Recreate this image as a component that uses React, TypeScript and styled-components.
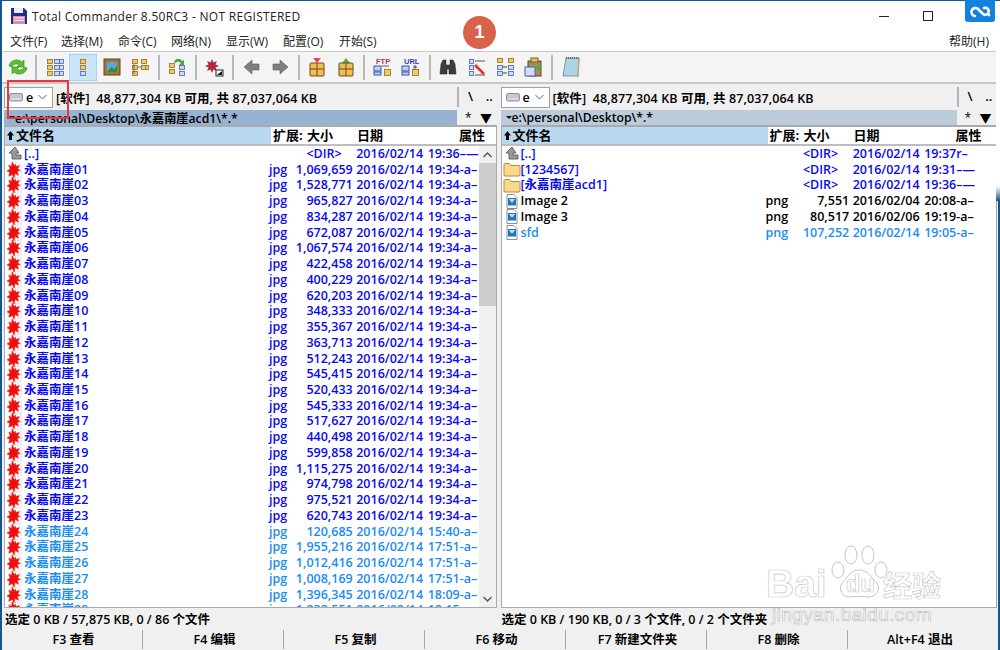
import React from 'react'
import styled, { createGlobalStyle } from 'styled-components'

const GlobalStyle = createGlobalStyle`
  html, body { margin: 0; padding: 0; background: #14578c; }
  #root { width: 1000px; height: 650px; overflow: hidden; position: relative; }
`

const UI = `"Open Sans", "Noto Sans CJK SC", sans-serif`

const Screen = styled.div`
  position: relative;
  width: 1000px;
  height: 650px;
  overflow: hidden;
  background: #14578c;
  &::after {
    content: '';
    position: absolute;
    right: 0;
    top: 1px;
    width: 4px;
    height: 200px;
    background: linear-gradient(180deg, #ffffff 0, #ffffff 185px, #14578c 100%);
  }
`

const Window = styled.div`
  width: 996px;
  height: 649px;
  margin: 1px 0 0 2px;
  display: flex;
  flex-direction: column;
  background: #ffffff;
  font-family: ${UI};
  color: #000;
`

const TitleBar = styled.div`
  height: 30px;
  display: flex;
  align-items: center;
  padding: 0 0 0 9px;
  gap: 5px;
  font-size: 12px;
  letter-spacing: 0.3px;
  color: #222;
`

const WinControls = styled.div`
  margin-left: auto;
  display: flex;
  align-items: center;
  gap: 34px;
  padding-right: 65px;
`

const MinBtn = styled.i`
  display: block;
  width: 10px;
  height: 1px;
  background: #222;
`

const MaxBtn = styled.i`
  display: block;
  width: 8px;
  height: 8px;
  border: 1px solid #222;
`

const MenuBar = styled.div`
  height: 20px;
  display: flex;
  align-items: center;
  padding-left: 8px;
  font-size: 12px;
  color: #222;
  border-bottom: 1px solid #c9c9c9;
`

const MenuItem = styled.span<{ $w?: number }>`
  width: ${p => p.$w ?? 56}px;
  white-space: nowrap;
  &:last-child {
    width: auto;
    margin-left: auto;
    padding-right: 9px;
  }
`

const ToolBar = styled.div`
  height: 30px;
  display: flex;
  align-items: center;
  padding-left: 1.5px;
  background: #f4f4f4;
  border-bottom: 2px solid #c9c9c9;
`

const ToolBtn = styled.div<{ $active?: boolean }>`
  width: 28.4px;
  height: 27px;
  display: flex;
  align-items: center;
  justify-content: center;
  box-sizing: border-box;
  background: ${p => (p.$active ? '#cce4f7' : 'transparent')};
  border: 1px solid ${p => (p.$active ? '#a6d2f3' : 'transparent')};
`

const ToolSep = styled.div`
  width: 2px;
  height: 25px;
  margin: 0 3.4px;
  background: #b9b9b9;
`

const Panels = styled.div`
  flex: 1;
  min-height: 0;
  display: grid;
  grid-template-columns: 493px 496px;
  column-gap: 3.5px;
  padding-left: 2px;
  background: #f0f0f0;
`

const Panel = styled.section`
  min-width: 0;
  min-height: 0;
  display: flex;
  flex-direction: column;
`

const DriveRow = styled.div`
  height: 26px;
  display: flex;
  align-items: center;
  font-size: 12.5px;
  font-weight: 600;
  letter-spacing: 0.1px;
  white-space: pre;
`

const DriveCombo = styled.div`
  width: 49px;
  height: 21px;
  box-sizing: border-box;
  flex: none;
  display: flex;
  align-items: center;
  gap: 3px;
  padding-left: 4px;
  margin-right: 3px;
  background: #fff;
  border: 1px solid #a0a0a0;
`

const Chevron = styled.svg`
  margin-left: auto;
  margin-right: 5px;
`

const RootBtns = styled.div`
  margin-left: auto;
  height: 20px;
  width: 40px;
  flex: none;
  box-sizing: border-box;
  border-left: 2px solid #b5b5b5;
  display: flex;
  justify-content: space-between;
  padding: 0 4px 0 9px;
  font-size: 13px;
  line-height: 18px;
`

const PathRow = styled.div`
  height: 15px;
  display: flex;
  align-items: center;
`

const PathText = styled.div<{ $active?: boolean }>`
  flex: 1;
  height: 15px;
  display: flex;
  align-items: center;
  gap: 0;
  padding-left: 5px;
  font-size: 12.2px;
  font-weight: 600;
  white-space: nowrap;
  overflow: hidden;
  background: ${p => (p.$active ? '#97b3d1' : '#bccbd9')};
`

const PathBtns = styled.div`
  width: 40px;
  flex: none;
  display: flex;
  justify-content: space-between;
  align-items: center;
  padding: 0 5px 0 8px;
  box-sizing: border-box;
  font-size: 12px;
`

const ListBox = styled.div`
  flex: 1;
  min-height: 0;
  display: flex;
  flex-direction: column;
  background: #fff;
  border: 1px solid #a9a9b0;
  border-width: 2px 1px 1px 1px;
`

const HeadRow = styled.div`
  flex: none;
  height: 19px;
  box-sizing: border-box;
  display: grid;
  grid-template-columns: 266px 34px 50px 102px 1fr;
  font-size: 13px;
  font-weight: 700;
  line-height: 17px;
  border-bottom: 2px solid #bcbcc2;
  white-space: nowrap;
`

const HeadCell = styled.div<{ $sorted?: boolean }>`
  padding-left: 2px;
  display: flex;
  align-items: center;
  gap: 2px;
  background: ${p => (p.$sorted ? '#b9d8ef' : '#fff')};
`

const ListBody = styled.div`
  flex: 1;
  min-height: 0;
  display: flex;
`

const Rows = styled.div`
  flex: 1;
  min-width: 0;
  overflow: hidden;
`

const Row = styled.div<{ $tone: string }>`
  height: 15.74px;
  line-height: 15.74px;
  display: grid;
  grid-template-columns: 19px 245px 26px 57.7px 3.5px 71.5px 32px 1fr;
  font-size: 12.5px;
  font-weight: 600;
  white-space: nowrap;
  color: ${p => p.$tone};
`

const RowIcon = styled.span`
  display: flex;
  align-items: center;
  justify-content: center;
  padding-left: 1px;
  svg {
    overflow: visible;
  }
`

const Size = styled.span<{ $dir?: boolean }>`
  text-align: right;
  grid-column: 4;
  padding-right: ${p => (p.$dir ? 11 : 0)}px;
`

const DateCell = styled.span`
  grid-column: 6;
`

const Scroll = styled.div`
  width: 17px;
  flex: none;
  display: flex;
  flex-direction: column;
  align-items: center;
  background: #f0f0f0;
`

const ScrollArrow = styled.div`
  height: 17px;
  flex: none;
  display: flex;
  align-items: center;
`

const Thumb = styled.div`
  width: 17px;
  height: 143px;
  background: #cdcdcd;
`

const ScrollFill = styled.div`
  flex: 1;
`

const StatusRow = styled.div`
  height: 22px;
  line-height: 23px;
  padding-left: 1px;
  font-size: 12.5px;
  font-weight: 600;
  white-space: nowrap;
`

const FnBar = styled.div`
  height: 20px;
  flex: none;
  display: grid;
  grid-template-columns: repeat(7, 141px);
  background: #f0f0f0;
`

const FnKey = styled.div`
  box-sizing: border-box;
  height: 19px;
  line-height: 19px;
  padding-left: 3px;
  text-align: center;
  font-size: 12.5px;
  font-weight: 600;
  border-right: 1px solid #a8a8a8;
  &:last-child {
    border-right: 0;
  }
`

/* things that sit on top of the screenshot */
const RedBox = styled.div`
  position: absolute;
  left: 7px;
  top: 80px;
  width: 62px;
  height: 39px;
  box-sizing: border-box;
  border: 2px solid #e8383f;
`

const StepBadge = styled.div`
  position: absolute;
  left: 463px;
  top: 16px;
  width: 33px;
  height: 33px;
  border-radius: 50%;
  background: #d9634a;
  box-shadow: 0 0 0 2px rgba(255, 255, 255, 0.85);
  color: #fff;
  font: 700 18px/33px "Liberation Sans", sans-serif;
  text-align: center;
`

const CloudTag = styled.div`
  position: absolute;
  right: 5px;
  top: 0;
  width: 30px;
  height: 22px;
  border-radius: 0 0 3px 3px;
  background: #1183de;
  display: flex;
  align-items: center;
  justify-content: center;
`

const Watermark = styled.div`
  position: absolute;
  left: 766px;
  top: 543px;
  width: 190px;
  height: 90px;
  font-family: "Liberation Sans", sans-serif;
  color: rgba(255, 255, 255, 0.75);
  -webkit-text-stroke: 0.7px rgba(150, 150, 150, 0.55);
`

const WmPaw = styled.svg`
  position: absolute;
  left: 62px;
  top: 2px;
`

const WmLogo = styled.div`
  position: absolute;
  left: 0;
  top: 23px;
  display: flex;
  align-items: center;
  font-size: 39px;
  font-weight: 700;
  line-height: 36px;
  white-space: nowrap;
`

const WmDu = styled.span`
  font-size: 24px;
  margin-left: 19px;
`

const WmUrl = styled.div`
  position: absolute;
  left: 6px;
  top: 61px;
  font-size: 19px;
  letter-spacing: 0.4px;
  white-space: nowrap;
`

const WmCn = styled.span`
  font-family: "Noto Sans CJK SC", sans-serif;
  font-size: 29px;
  margin-left: 8px;
`

const Fold = ({ x, y, w = 5, h = 4 }: { x: number; y: number; w?: number; h?: number }) => (
  <rect x={x + 0.5} y={y + 0.5} width={w} height={h} fill="#f4c95d" stroke="#8d6f25" strokeWidth="0.8" />
)

const Doc = ({ x, y, w = 5, h = 4 }: { x: number; y: number; w?: number; h?: number }) => (
  <rect x={x + 0.5} y={y + 0.5} width={w} height={h} fill="#cfd8f5" stroke="#4a62b8" strokeWidth="0.8" />
)

const Svg: React.FC<{ s?: number; children: React.ReactNode }> = ({ s = 22, children }) => (
  <svg width={s} height={s} viewBox="0 0 22 22">{children}</svg>
)

const tools: (React.ReactNode | null)[] = [
  <Svg>
    <path d="M2 10c1-6 9-8 13-4l2-2v7h-7l2-2c-2-2-6-1-7 2z" fill="#5cc02e" stroke="#2f8a12" strokeWidth=".6" />
    <path d="M20 12c-1 6-9 8-13 4l-2 2v-7h7l-2 2c2 2 6 1 7-2z" fill="#5cc02e" stroke="#2f8a12" strokeWidth=".6" />
  </Svg>,
  null,
  <Svg>
    <Fold x={3} y={3} /><Fold x={3} y={9} /><Fold x={3} y={15} />
    <Doc x={10} y={3} /><Doc x={10} y={9} /><Doc x={10} y={15} />
    <Doc x={15} y={3} w={4} /><Doc x={15} y={9} w={4} /><Doc x={15} y={15} w={4} />
  </Svg>,
  <Svg>
    <Fold x={8} y={3} /><Fold x={8} y={9} /><Doc x={8} y={15} />
  </Svg>,
  <Svg>
    <rect x="3" y="3" width="16" height="16" fill="#a07a3c" stroke="#5e4520" />
    <rect x="6" y="6" width="10" height="10" fill="#5aa7e0" />
    <path d="M6 16l4-5 3 2 3-3v6z" fill="#2f8f3c" />
  </Svg>,
  <Svg>
    <Fold x={3} y={3} /><Fold x={3} y={9} /><Fold x={3} y={15} />
    <Fold x={12} y={3} /><Fold x={12} y={9} /><Fold x={16} y={9} w={3} />
    <path d="M5 8v10M9 11h3" stroke="#555" strokeWidth=".8" />
  </Svg>,
  null,
  <Svg>
    <Fold x={3} y={7} /><Fold x={3} y={13} /><Doc x={13} y={9} /><Doc x={13} y={15} />
    <path d="M8 6c2-4 6-4 8-1l2-1v5h-5l2-2c-2-2-4-2-6 0z" fill="#46a83a" />
  </Svg>,
  null,
  <Svg>
    <path d="M9 3l1.500 3.500L14 5l-1.500 3.500L16 10l-3.500 1.500L14 15l-3.500-1.500L9 17l-1.500-3.500L4 15l1.500-3.500L2 10l3.500-1.500L4 5l3.500 1.500z" fill="#b4283f" />
    <rect x="13" y="14" width="7" height="6" fill="#fff" stroke="#222" />
    <path d="M14 19l5-4v4z" fill="#111" />
  </Svg>,
  null,
  <Svg><path d="M3 11l8-7v4h7v6h-7v4z" fill="#7f7f7f" stroke="#5d5d5d" strokeWidth=".6" /></Svg>,
  <Svg><path d="M19 11l-8-7v4H4v6h7v4z" fill="#7f7f7f" stroke="#5d5d5d" strokeWidth=".6" /></Svg>,
  null,
  <Svg>
    <path d="M11 7L7 2h8z" fill="#e2485a" />
    <rect x="4" y="7" width="14" height="13" rx="1" fill="#f0bc55" stroke="#6e4d16" />
    <path d="M4 13h14M11 7v13" stroke="#6e4d16" />
  </Svg>,
  <Svg>
    <path d="M11 2l4 5H7z" fill="#4cb53c" />
    <rect x="4" y="7" width="14" height="13" rx="1" fill="#f0bc55" stroke="#6e4d16" />
    <path d="M4 13h14M11 7v13" stroke="#6e4d16" />
  </Svg>,
  null,
  <Svg>
    <text x="4" y="7.500" fontSize="7.500" fontWeight="700" fill="#b23a48" fontFamily="Liberation Sans">FTP</text>
    <path d="M10 10h7" stroke="#b23a48" />
    <rect x="2" y="10" width="7" height="5" fill="#bcd0ef" stroke="#3c55a8" /><rect x="2" y="16" width="7" height="3" fill="#bcd0ef" stroke="#3c55a8" />
    <Fold x={12} y={13} w={6} h={6} />
  </Svg>,
  <Svg>
    <text x="4" y="7.500" fontSize="7.500" fontWeight="700" fill="#2c46b4" fontFamily="Liberation Sans">URL</text>
    <path d="M13 11h4M15 9v4" stroke="#2c46b4" />
    <rect x="2" y="10" width="7" height="5" fill="#bcd0ef" stroke="#3c55a8" /><rect x="2" y="16" width="7" height="3" fill="#bcd0ef" stroke="#3c55a8" />
    <Fold x={12} y={13} w={6} h={6} />
  </Svg>,
  null,
  <Svg>
    <path d="M3 18l1-10 2-4h3v5h4V4h3l2 4 1 10h-7v-5h-2v5z" fill="#3d3d3d" stroke="#1a1a1a" strokeWidth=".5" />
  </Svg>,
  <Svg>
    <Doc x={3} y={3} w={4} /><Doc x={3} y={9} w={4} /><Doc x={3} y={15} w={4} />
    <path d="M9 5h10M9 19h10" stroke="#555" />
    <path d="M9 9l9 9" stroke="#d9333f" strokeWidth="2.600" />
  </Svg>,
  <Svg>
    <Fold x={3} y={2} /><Fold x={14} y={2} />
    <Doc x={3} y={9} /><Doc x={14} y={9} /><Doc x={3} y={15} /><Doc x={14} y={15} />
    <path d="M9 11h4M9 17h4" stroke="#46a83a" strokeWidth="1.500" />
  </Svg>,
  <Svg>
    <rect x="6" y="5" width="13" height="15" fill="#a8895a" stroke="#5e4520" />
    <rect x="9" y="2" width="7" height="4" fill="#e8c25a" stroke="#7b5c1c" />
    <rect x="3" y="11" width="10" height="9" fill="#d5ddf5" stroke="#4a62b8" />
    <path d="M12 10h4V7l4 4-4 4v-3h-4z" fill="#46b03a" />
  </Svg>,
  null,
  <Svg>
    <path d="M6 2h13l-1 18H3z" fill="#a9d6e2" stroke="#7d9b9e" />
    <path d="M6 2h13" stroke="#4d6f78" strokeDasharray="1 1" strokeWidth="2" />
    <path d="M19 2l-1 18-1 1" stroke="#c1a878" fill="none" strokeWidth="1.500" />
  </Svg>,
]

const UpIcon = () => (
  <svg width="16" height="15" viewBox="0 0 16 15">
    <path d="M8 1L2 7h3v6h9V9H9V7h3z" fill="#9a9a9a" stroke="#4f4f4f" strokeWidth=".8" />
  </svg>
)

const FolderIcon = () => (
  <svg width="18" height="15" viewBox="0 0 18 15">
    <path d="M1 3c0-1 .5-1.500 1.500-1.500h4l1.500 2h8c.6 0 1 .4 1 1V13c0 .6-.4 1-1 1H2c-.6 0-1-.4-1-1z" fill="#fbd98c" stroke="#b48a35" />
  </svg>
)

const ImageIcon = () => (
  <svg width="14" height="15" viewBox="0 0 14 15">
    <path d="M2 .5h7l3 3v11H2z" fill="#fff" stroke="#8f8f8f" />
    <rect x="3" y="4" width="8" height="7.500" fill="#1b78c8" />
    <path d="M4 5h6l-3 4z" fill="#bfe0f7" />
  </svg>
)

const StarIcon = () => (
  <svg width="16" height="16" viewBox="0 0 18 18">
    <path d="M4 1h10l2 2v14H4z" fill="#fff" stroke="#b0b0b0" strokeDasharray="1 1.500" />
    <path d="M6 0l2 4 1.500-1.500L10 5l4-1-2 4 3 1.500-3.500 1L13 15l-4-2-1 5-2-4-4 2 1-4.500L0 10l3.500-2L2 3.500 5 5z" fill="#f20d0d" stroke="#f20d0d" strokeWidth=".6" />
  </svg>
)

const SortArrow = () => (
  <svg width="7" height="9" viewBox="0 0 7 9">
    <path d="M3.500 0L7 4.500H5V9H2V4.500H0z" fill="#000" />
  </svg>
)

const PathArrow = () => (
  <svg width="6" height="3" viewBox="0 0 8 4">
    <path d="M0 0h8L4 4z" fill="#111" />
  </svg>
)

type FileRow = { name: string; ext?: string; size: string; date: string; time: string; attr: string; tone: string; icon: React.ReactNode }

const BLUE = '#0808f5'
const SKY = '#1b8cf5'

const leftData: [string, string, string?, string?][] = [
  ['01', '1,069,659'], ['02', '1,528,771'], ['03', '965,827'], ['04', '834,287'], ['05', '672,087'],
  ['06', '1,067,574'], ['07', '422,458'], ['08', '400,229'], ['09', '620,203'], ['10', '348,333'],
  ['11', '355,367'], ['12', '363,713'], ['13', '512,243'], ['14', '545,415'], ['15', '520,433'],
  ['16', '545,333'], ['17', '517,627'], ['18', '440,498'], ['19', '599,858'], ['20', '1,115,275'],
  ['21', '974,798'], ['22', '975,521'], ['23', '620,743'],
  ['24', '120,685', '15:40', SKY], ['25', '1,955,216', '17:51', SKY], ['26', '1,012,416', '17:51', SKY],
  ['27', '1,008,169', '17:51', SKY], ['28', '1,396,345', '18:09', SKY], ['29', '1,233,551', '18:15', SKY],
]

const leftRows: FileRow[] = [
  { name: '[..]', size: '<DIR>', date: '2016/02/14', time: '19:36', attr: '–—', tone: BLUE, icon: <UpIcon /> },
  ...leftData.map(([n, size, time, tone]) => ({
    name: `永嘉南崖${n}`,
    ext: 'jpg',
    size,
    date: '2016/02/14',
    time: time ?? '19:34',
    attr: '-a–',
    tone: tone ?? BLUE,
    icon: <StarIcon />,
  })),
]

const rightRows: FileRow[] = [
  { name: '[..]', size: '<DIR>', date: '2016/02/14', time: '19:37', attr: 'r–', tone: BLUE, icon: <UpIcon /> },
  { name: '[1234567]', size: '<DIR>', date: '2016/02/14', time: '19:31', attr: '–—', tone: BLUE, icon: <FolderIcon /> },
  { name: '[永嘉南崖acd1]', size: '<DIR>', date: '2016/02/14', time: '19:36', attr: '–—', tone: BLUE, icon: <FolderIcon /> },
  { name: 'Image 2', ext: 'png', size: '7,551', date: '2016/02/04', time: '20:08', attr: '-a–', tone: '#000', icon: <ImageIcon /> },
  { name: 'Image 3', ext: 'png', size: '80,517', date: '2016/02/06', time: '19:19', attr: '-a–', tone: '#000', icon: <ImageIcon /> },
  { name: 'sfd', ext: 'png', size: '107,252', date: '2016/02/14', time: '19:05', attr: '-a–', tone: SKY, icon: <ImageIcon /> },
]

const menus: [string, number][] = [
  ['文件(F)', 51], ['选择(M)', 57], ['命令(C)', 53], ['网络(N)', 55], ['显示(W)', 57], ['配置(O)', 56], ['开始(S)', 0],
]

const fnKeys = ['F3 查看', 'F4 编辑', 'F5 复制', 'F6 移动', 'F7 新建文件夹', 'F8 删除', 'Alt+F4 退出']

const DriveIcon = () => (
  <svg width="14" height="10" viewBox="0 0 14 10">
    <rect x=".5" y="1.500" width="13" height="7.500" rx="1.500" fill="#c4c9cf" stroke="#8a8f96" />
    <path d="M2 7h10" stroke="#eef0f2" />
  </svg>
)

const FilePanel: React.FC<{ active?: boolean; free: string; path: string; rows: FileRow[]; status: string; scroll?: boolean }> = ({
  active, free, path, rows, status, scroll,
}) => (
  <Panel>
    <DriveRow>
      <DriveCombo>
        <DriveIcon />
        e
        <Chevron width="9" height="6" viewBox="0 0 9 6">
          <path d="M.5 1l4 4 4-4" fill="none" stroke="#666" />
        </Chevron>
      </DriveCombo>
      {free}
      <RootBtns>
        <span>\</span>
        <span>..</span>
      </RootBtns>
    </DriveRow>
    <PathRow>
      <PathText $active={active}><PathArrow />{path}</PathText>
      <PathBtns>
        <span>*</span>
        <span>▼</span>
      </PathBtns>
    </PathRow>
    <ListBox>
      <HeadRow>
        <HeadCell $sorted><SortArrow />文件名</HeadCell>
        <HeadCell>扩展:</HeadCell>
        <HeadCell>大小</HeadCell>
        <HeadCell>日期</HeadCell>
        <HeadCell>属性</HeadCell>
      </HeadRow>
      <ListBody>
        <Rows>
          {rows.map(r => (
            <Row key={r.name} $tone={r.tone}>
              <RowIcon>{r.icon}</RowIcon>
              <span>{r.name}</span>
              <span>{r.ext}</span>
              <Size $dir={r.size === '<DIR>'}>{r.size}</Size>
              <DateCell>{r.date}</DateCell>
              <span>{r.time}</span>
              <span>{r.attr}</span>
            </Row>
          ))}
        </Rows>
        {scroll && (
          <Scroll>
            <ScrollArrow>
              <svg width="9" height="6" viewBox="0 0 9 6"><path d="M.5 5l4-4 4 4" fill="none" stroke="#555" strokeWidth="1.400" /></svg>
            </ScrollArrow>
            <Thumb />
            <ScrollFill />
            <ScrollArrow>
              <svg width="9" height="6" viewBox="0 0 9 6"><path d="M.5 1l4 4 4-4" fill="none" stroke="#555" strokeWidth="1.400" /></svg>
            </ScrollArrow>
          </Scroll>
        )}
      </ListBody>
    </ListBox>
    <StatusRow>{status}</StatusRow>
  </Panel>
)

const App: React.FC = () => (
  <Screen>
    <GlobalStyle />
    <Window>
      <TitleBar>
        <svg width="16" height="16" viewBox="0 0 16 16">
          <path d="M0 0h13l3 3v13H0z" fill="#1c2f8f" />
          <rect x="3" y="0" width="9" height="5" fill="#e9edf5" />
          <rect x="2" y="8" width="12" height="8" fill="#e88aa8" />
          <path d="M3 10h10M3 12.500h10" stroke="#fff" />
        </svg>
        Total Commander 8.50RC3 - NOT REGISTERED
        <WinControls>
          <MinBtn />
          <MaxBtn />
        </WinControls>
      </TitleBar>
      <MenuBar>
        {menus.map(([m, w]) => (
          <MenuItem key={m} $w={w}>{m}</MenuItem>
        ))}
        <MenuItem>帮助(H)</MenuItem>
      </MenuBar>
      <ToolBar>
        {tools.map((t, i) =>
          t === null ? <ToolSep key={i} /> : <ToolBtn key={i} $active={i === 3}>{t}</ToolBtn>,
        )}
      </ToolBar>
      <Panels>
        <FilePanel
          active
          scroll
          free="[软件]  48,877,304 KB 可用, 共 87,037,064 KB"
          path="e:\personal\Desktop\永嘉南崖acd1\*.*"
          rows={leftRows}
          status="选定 0 KB / 57,875 KB, 0 / 86 个文件"
        />
        <FilePanel
          free="[软件]  48,877,304 KB 可用, 共 87,037,064 KB"
          path="e:\personal\Desktop\*.*"
          rows={rightRows}
          status="选定 0 KB / 190 KB, 0 / 3 个文件, 0 / 2 个文件夹"
        />
      </Panels>
      <FnBar>
        {fnKeys.map(k => (
          <FnKey key={k}>{k}</FnKey>
        ))}
      </FnBar>
    </Window>

    <RedBox />
    <StepBadge>1</StepBadge>
    <CloudTag>
      <svg width="22" height="16" viewBox="0 0 22 16">
        <path d="M6 13a4 4 0 1 1 3-7l5 5a3.500 3.500 0 1 0 1-6" fill="none" stroke="#fff" strokeWidth="2.600" strokeLinecap="round" />
        <circle cx="20" cy="12" r="1.400" fill="#fff" />
      </svg>
    </CloudTag>
    <Watermark>
      <WmPaw width="62" height="56" viewBox="0 0 62 56">
        <g fill="rgba(255,255,255,.6)" stroke="rgba(150,150,150,.55)">
          <ellipse cx="10" cy="25" rx="6" ry="8" />
          <ellipse cx="23" cy="10" rx="6" ry="9" />
          <ellipse cx="40" cy="10" rx="6" ry="9" />
          <ellipse cx="53" cy="25" rx="6" ry="8" />
          <path d="M31 25c10 0 12 8 18 13 4 6-1 15-10 14-6-1-11-1-16 0-9 1-13-8-9-14 6-5 8-13 17-13z" />
        </g>
      </WmPaw>
      <WmLogo>
        Bai<WmDu>du</WmDu>
        <WmCn>经验</WmCn>
      </WmLogo>
      <WmUrl>jingyan.baidu.com</WmUrl>
    </Watermark>
  </Screen>
)

export default App
